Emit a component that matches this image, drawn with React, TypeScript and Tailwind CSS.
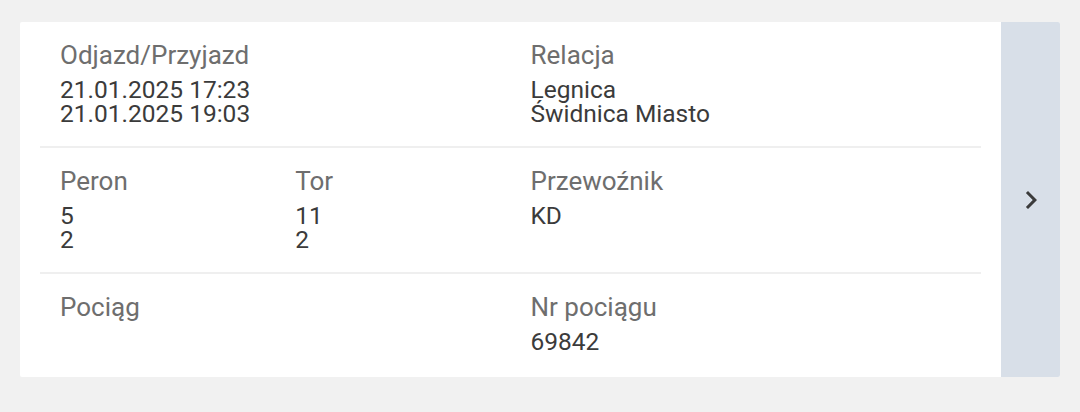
import { FunctionComponent, ReactNode } from "react";

interface FieldProps {
    label: string,
    values: string[],
    span?: boolean
}

const Field: FunctionComponent<FieldProps> = ({ label, values, span }) => {
    return (
        <div className={span ? "col-span-2 pl-5" : "pl-5"}>
            <div className="text-[26px] leading-[30px] text-[#6e6e6e]">{label}</div>
            <div className="mt-[7.5px] text-[24.5px] leading-[24px] text-[#3b3b3b]">
                {values.map((v, i) => (
                    <div key={i}>{v}</div>
                ))}
            </div>
        </div>
    );
}

const Row: FunctionComponent<{ children: ReactNode, last?: boolean }> = ({ children, last }) => {
    return (
        <div className={last ? "grid grid-cols-4 pt-[18px] pb-[23.5px]" : "grid grid-cols-4 pt-[18px] pb-[20.5px] border-b-2 border-[#efefef]"}>
            {children}
        </div>
    );
}

export default function App() {
    return (
        <div className="min-h-[412px] w-full bg-[#f1f1f1] pt-[22px] px-5 font-['Roboto',sans-serif]">
            <div className="flex bg-white rounded-[2px] overflow-hidden">
                <div className="flex-1 px-5">
                    <Row>
                        <Field span label="Odjazd/Przyjazd" values={["21.01.2025 17:23", "21.01.2025 19:03"]} />
                        <Field span label="Relacja" values={["Legnica", "Świdnica Miasto"]} />
                    </Row>
                    <Row>
                        <Field label="Peron" values={["5", "2"]} />
                        <Field label="Tor" values={["11", "2"]} />
                        <Field span label="Przewoźnik" values={["KD"]} />
                    </Row>
                    <Row last>
                        <Field span label="Pociąg" values={[]} />
                        <Field span label="Nr pociągu" values={["69842"]} />
                    </Row>
                </div>
                <button className="w-[59px] bg-[#d8dfe8] flex items-center justify-center">
                    <svg width="36" height="36" viewBox="0 0 24 24" fill="#3b3b3b">
                        <path d="M10 6L8.59 7.41 13.17 12l-4.58 4.59L10 18l6-6z" />
                    </svg>
                </button>
            </div>
        </div>
    );
}
